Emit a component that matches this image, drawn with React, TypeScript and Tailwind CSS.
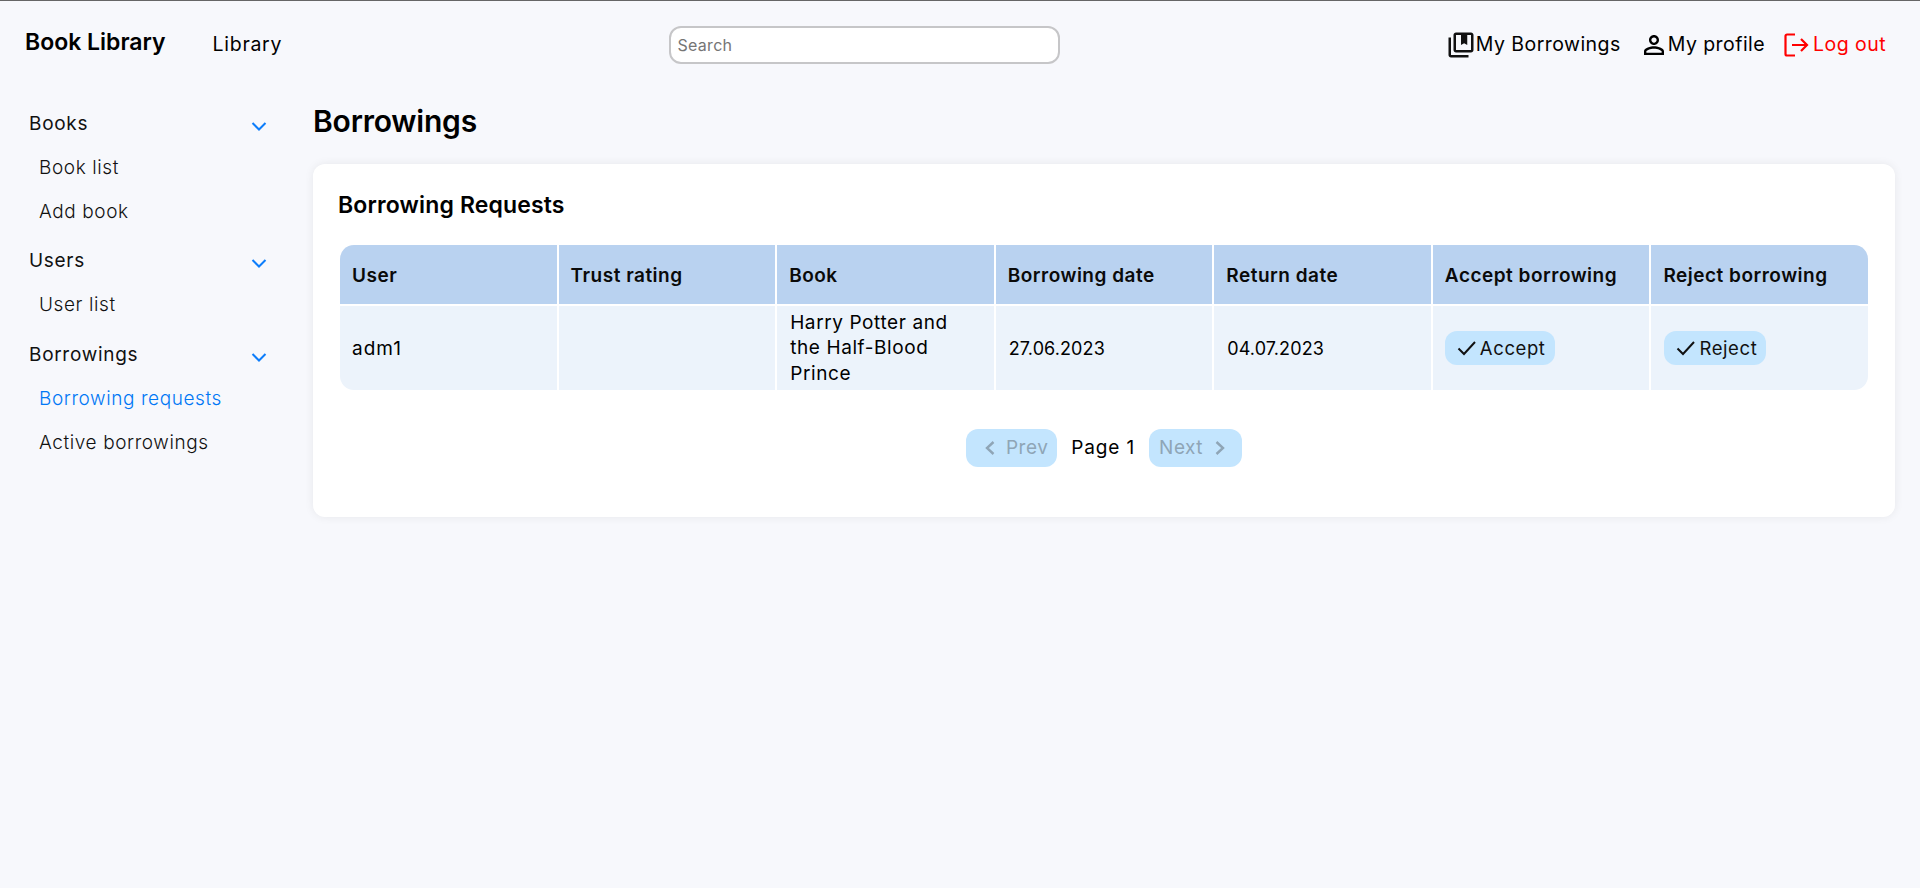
import React from "react";

const font = { fontFamily: "Inter, 'Noto Sans', sans-serif" };

function Chevron() {
  return (
    <svg width="16" height="16" viewBox="0 0 16 16" fill="none" stroke="#0d7dfb" strokeWidth="2" className="mt-[4px] mr-[1px]">
      <path d="M1.5 5l6.5 6.5L14.5 5" />
    </svg>
  );
}

function Check() {
  return (
    <svg width="20" height="20" viewBox="0 0 20 20" fill="none" stroke="#111" strokeWidth="2">
      <path d="M1.5 10.5l5.5 5.5L18 4" />
    </svg>
  );
}

function Group({ title, items }: { title: string; items: { t: string; active?: boolean }[] }) {
  return (
    <div className="flex flex-col">
      <div className="flex items-center justify-between h-[44px] pl-[4px] pr-[2px] text-[19px] text-[#111] tracking-[0.7px]">
        <span>{title}</span>
        <Chevron />
      </div>
      {items.map((i) => (
        <div key={i.t} className={`h-[44px] flex items-center pl-[14px] text-[19px] font-light tracking-[0.6px] ${i.active ? "text-[#0077f5]" : "text-[#111]"}`}>
          {i.t}
        </div>
      ))}
    </div>
  );
}

const headers = ["User", "Trust rating", "Book", "Borrowing date", "Return date", "Accept borrowing", "Reject borrowing"];

function Action({ label }: { label: string }) {
  return (
    <button className="inline-flex items-center gap-[3px] h-[34px] pl-[12px] pr-[9px] rounded-[12px] bg-[#c3e5fe] text-[18.5px] text-[#111] tracking-[0.6px]">
      <Check />
      <span className="mt-[2px]">{label}</span>
    </button>
  );
}

export default function App() {
  return (
    <div style={font} className="min-h-[888px] bg-[#f7f8fc] border-t border-[#666] text-black flex flex-col">
      <header className="flex items-center justify-between h-[87px] pl-[25px] pr-[34px]">
        <div className="flex items-center gap-[47px]">
          <span className="text-[23px] font-semibold -mt-[5px]">Book Library</span>
          <span className="text-[19.5px] tracking-[0.7px] mt-[1px]">Library</span>
        </div>
        <input
          placeholder="Search"
          className="w-[391px] h-[38px] bg-white border-2 border-[#c6c6c8] rounded-[12px] px-[6px] text-[16px] placeholder:text-[#757575] tracking-[0.3px]"
        />
        <div className="flex items-center gap-[18px] text-[19.5px] tracking-[0.45px] mt-[1px]">
          <span className="flex items-center">
            <svg width="30" height="30" viewBox="0 0 24 24" fill="#111" className="-ml-[2px] -mt-[1px]">
              <path d="M4 6H2v14c0 1.1.9 2 2 2h14v-2H4V6z M20 2H8c-1.1 0-2 .9-2 2v12c0 1.1.9 2 2 2h12c1.1 0 2-.9 2-2V4c0-1.1-.9-2-2-2zm0 14H8V4h4v8l2.5-1.5L17 12V4h3v12z" />
            </svg>
            My Borrowings
          </span>
          <span className="flex items-center mr-[1px]">
            <svg width="30" height="30" viewBox="0 0 24 24" fill="#000" className="-mr-[1px]">
              <path d="M12 5.9c1.16 0 2.1.94 2.1 2.1s-.94 2.1-2.1 2.1S9.9 9.16 9.9 8s.94-2.1 2.1-2.1m0 9c2.97 0 6.1 1.46 6.1 2.1v1.1H5.9V17c0-.64 3.13-2.1 6.1-2.1M12 4C9.79 4 8 5.79 8 8s1.79 4 4 4 4-1.79 4-4-1.79-4-4-4zm0 9c-2.67 0-8 1.34-8 4v3h16v-3c0-2.66-5.33-4-8-4z" />
            </svg>
            My profile
          </span>
          <span className="flex items-center text-[#ff0000]">
            <svg width="26" height="24" viewBox="0 0 26 24" fill="none" stroke="#ff0000" strokeWidth="2.2" className="mr-[3px]">
              <path d="M11 1.5H3a1.5 1.5 0 0 0-1.5 1.5v18A1.5 1.5 0 0 0 3 22.5h8" />
              <path d="M8 12h15M17 6l6 6-6 6" />
            </svg>
            Log out
          </span>
        </div>
      </header>

      <div className="flex flex-1 pr-[25px]">
        <aside className="w-[313px] shrink-0 pl-[25px] pr-[43px] pt-[14px]">
          <Group title="Books" items={[{ t: "Book list" }, { t: "Add book" }]} />
          <div className="mt-[5px]">
            <Group title="Users" items={[{ t: "User list" }]} />
          </div>
          <div className="mt-[6px]">
            <Group title="Borrowings" items={[{ t: "Borrowing requests", active: true }, { t: "Active borrowings" }]} />
          </div>
        </aside>

        <main className="flex-1 min-w-0">
          <h1 className="text-[30px] font-semibold h-[76px] pt-[11px] leading-[44px] tracking-[-0.2px]">Borrowings</h1>
          <section className="bg-white rounded-[12px] shadow-[0_0_10px_rgba(0,0,0,0.07)] h-[353px] px-[27px] pt-[25px]">
            <h2 className="text-[23px] font-semibold leading-[32px] tracking-[0.15px] mb-[24px] -ml-[2px]">Borrowing Requests</h2>
            <div className="grid grid-cols-7 gap-[2px] rounded-[14px] overflow-hidden text-[19px]">
              {headers.map((h) => (
                <div key={h} className="bg-[#b9d2f0] h-[59px] flex items-center pl-[12px] pt-[3px] font-semibold tracking-[0.5px] text-[#0a0a0a]">
                  {h}
                </div>
              ))}
              <div className="bg-[#ecf3fb] h-[84px] flex items-center pl-[12px] pt-[2px] tracking-[1px]">adm1</div>
              <div className="bg-[#ecf3fb]" />
              <div className="bg-[#ecf3fb] flex items-center pl-[13px] pr-[24px] leading-[25.5px] tracking-[0.6px]">Harry Potter and the Half-Blood Prince</div>
              <div className="bg-[#ecf3fb] flex items-center pl-[13px] text-[18px] tracking-[0.1px]">27.06.2023</div>
              <div className="bg-[#ecf3fb] flex items-center pl-[13px] text-[18px] tracking-[0.1px]">04.07.2023</div>
              <div className="bg-[#ecf3fb] flex items-center pl-[12px]"><Action label="Accept" /></div>
              <div className="bg-[#ecf3fb] flex items-center pl-[13px]"><Action label="Reject" /></div>
            </div>
            <div className="flex items-center justify-center gap-[14px] mt-[39px] text-[19px] tracking-[0.5px]">
              <span className="flex items-center gap-[10px] h-[38px] pl-[18px] pr-[9px] rounded-[12px] bg-[#c3e5fe] text-[#8fa5b6]">
                <svg width="12" height="16" viewBox="0 0 12 16" fill="none" stroke="#8fa5b6" strokeWidth="2.4"><path d="M9.5 2L3 8l6.5 6" /></svg>
                Prev
              </span>
              <span className="tracking-[0.85px]">Page 1</span>
              <span className="flex items-center gap-[11px] h-[38px] pl-[10px] pr-[16px] rounded-[12px] bg-[#c3e5fe] text-[#8fa5b6]">
                Next
                <svg width="12" height="16" viewBox="0 0 12 16" fill="none" stroke="#8fa5b6" strokeWidth="2.4"><path d="M2.5 2L9 8l-6.5 6" /></svg>
              </span>
            </div>
          </section>
        </main>
      </div>
    </div>
  );
}
